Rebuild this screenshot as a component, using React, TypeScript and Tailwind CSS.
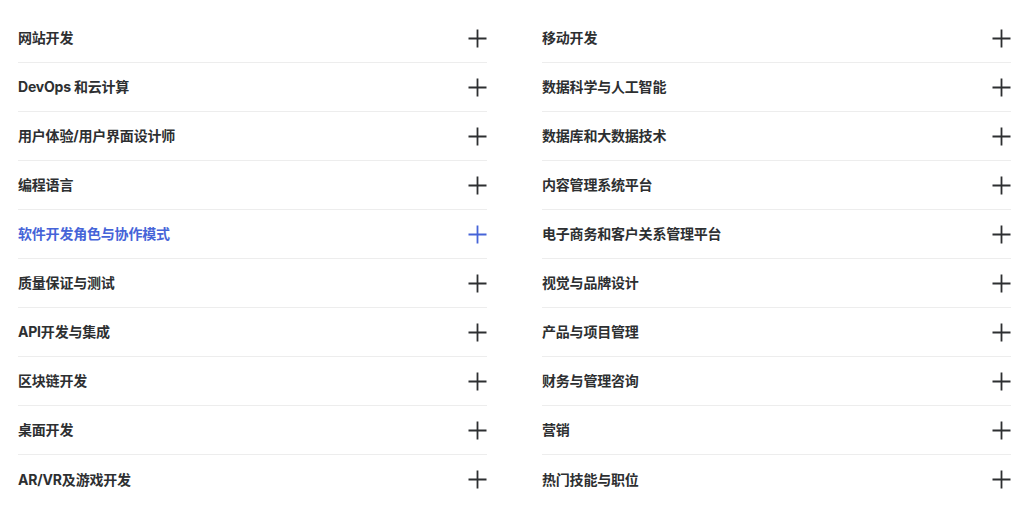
import React from "react";

const left = [
  "网站开发",
  "DevOps 和云计算",
  "用户体验/用户界面设计师",
  "编程语言",
  "软件开发角色与协作模式",
  "质量保证与测试",
  "API开发与集成",
  "区块链开发",
  "桌面开发",
  "AR/VR及游戏开发",
];
const right = [
  "移动开发",
  "数据科学与人工智能",
  "数据库和大数据技术",
  "内容管理系统平台",
  "电子商务和客户关系管理平台",
  "视觉与品牌设计",
  "产品与项目管理",
  "财务与管理咨询",
  "营销",
  "热门技能与职位",
];

function Plus({ active }: { active?: boolean }) {
  return (
    <svg width="19" height="19" viewBox="0 0 19 19" className={active ? "text-[#4664d8]" : "text-[#2d2f31]"}>
      <path d="M9.5 0.5V18.5M0.5 9.5H18.5" stroke="currentColor" strokeWidth="1.8" fill="none" />
    </svg>
  );
}

function Column({ items, activeIndex }: { items: string[]; activeIndex?: number }) {
  return (
    <div className="flex flex-col">
      {items.map((t, i) => {
        const active = i === activeIndex;
        const last = i === items.length - 1;
        return (
          <div
            key={t}
            className={`flex h-[49px] items-center justify-between ${last ? "" : "border-b border-[#ededed]"}`}
          >
            <span
              className={`text-[14px] font-bold leading-none tracking-[-0.2px] ${active ? "text-[#4664d8]" : "text-[#2d2f31]"}`}
            >
              {t}
            </span>
            <Plus active={active} />
          </div>
        );
      })}
    </div>
  );
}

export default function App() {
  return (
    <div
      className="w-[1024px] h-[507px] bg-white overflow-hidden pl-[18px] pr-[13px] pt-[14px]"
      style={{ fontFamily: 'Inter, "Noto Sans CJK SC", sans-serif' }}
    >
      <div className="grid grid-cols-2 gap-x-[55px]">
        <Column items={left} activeIndex={4} />
        <Column items={right} />
      </div>
    </div>
  );
}
